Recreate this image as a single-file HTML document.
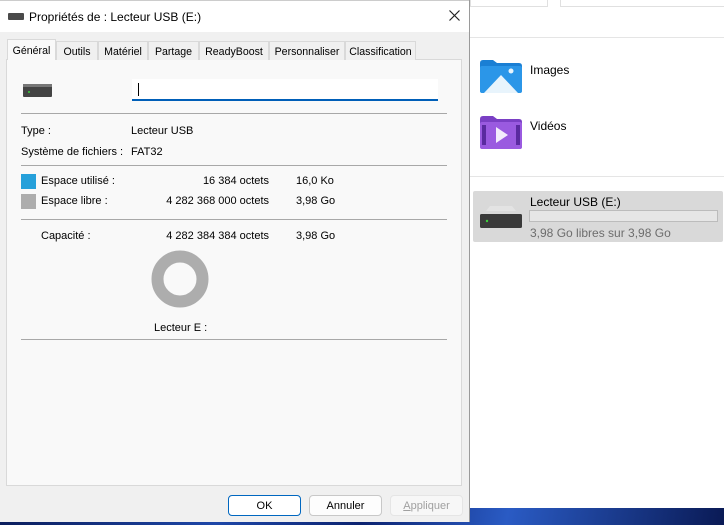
<!DOCTYPE html>
<html><head><meta charset="utf-8"><style>
*{margin:0;padding:0;box-sizing:border-box}
body{width:724px;height:525px;position:relative;overflow:hidden;background:#fff;font-family:"Liberation Sans",sans-serif;font-size:11px;color:#000}
.a{position:absolute;white-space:nowrap}
.sep{position:absolute;left:21px;width:426px;height:1px;background:#a8a8a8}
.tab{position:absolute;top:41px;height:19px;border:1px solid #d9d9d9;border-bottom:none;background:#f0f0f0;padding:4px 0 0;font-size:10.6px;text-align:center;overflow:hidden}
.btn{position:absolute;top:495px;width:73px;height:21px;border:1px solid #c8c8c8;border-radius:4px;background:#fdfdfd;text-align:center;line-height:21px;font-size:11px}
</style></head><body>
<div class="a" style="left:0;top:508px;width:724px;height:17px;background:linear-gradient(100deg,#0b1d5c,#1e47a8 30%,#0c2370 50%,#2a5bc4 70%,#0a1a55)"></div>
<div class="a" style="left:470px;top:0;width:254px;height:508px;background:#fff"></div>
<div class="a" style="left:470px;top:0;width:78px;height:7px;border:1px solid #e0e0e0;border-top:none"></div>
<div class="a" style="left:560px;top:0;width:164px;height:7px;border:1px solid #e0e0e0;border-top:none;border-right:none"></div>
<div class="a" style="left:470px;top:37px;width:254px;height:1px;background:#e5e5e5"></div>
<div class="a" style="left:470px;top:176px;width:254px;height:1px;background:#e5e5e5"></div>
<svg class="a" style="left:480px;top:60px" width="42" height="33" viewBox="0 0 42 33"><path d="M0 3q0-3 3-3h10l4 3h22q3 0 3 3v24q0 3-3 3H3q-3 0-3-3z" fill="#1a7fd4"/><rect x="0" y="6" width="42" height="27" rx="2" fill="#2b96e8"/><path d="M4 33L21 15l17 18z" fill="#e8f4fc"/><circle cx="31" cy="11" r="2.5" fill="#e8f4fc"/></svg>
<div class="a" style="left:530px;top:63px;font-size:12px">Images</div>
<svg class="a" style="left:480px;top:116px" width="42" height="33" viewBox="0 0 42 33"><path d="M0 3q0-3 3-3h10l4 3h22q3 0 3 3v24q0 3-3 3H3q-3 0-3-3z" fill="#7a3fc4"/><rect x="0" y="6" width="42" height="27" rx="2" fill="#9a5ae0"/><rect x="2" y="9" width="4" height="20" fill="#5a2aa0"/><rect x="36" y="9" width="4" height="20" fill="#5a2aa0"/><path d="M16 11l12 8-12 8z" fill="#f3ecfc"/></svg>
<div class="a" style="left:530px;top:119px;font-size:12px">Vidéos</div>
<div class="a" style="left:473px;top:191px;width:250px;height:51px;background:#d9d9d9;border-radius:2px"></div>
<svg class="a" style="left:480px;top:205px" width="42" height="24" viewBox="0 0 42 24"><path d="M6 6l4-5h22l4 5z" fill="#e3e3e3"/><rect x="0" y="9" width="42" height="14" rx="1.5" fill="#3a3a3a"/><circle cx="7" cy="16" r="1.2" fill="#3ad13a"/></svg>
<div class="a" style="left:530px;top:195px;font-size:12px">Lecteur USB (E:)</div>
<div class="a" style="left:529px;top:210px;width:189px;height:12px;background:#e6e6e6;border:1px solid #bcbcbc"></div>
<div class="a" style="left:530px;top:226px;font-size:12px;color:#6d6d6d">3,98 Go libres sur 3,98 Go</div>
<div class="a" style="left:0;top:0;width:470px;height:522px;background:#f0f0f0;border-right:1px solid #9a9a9a"></div>
<div class="a" style="left:0;top:0;width:469px;height:32px;background:#fff;border-top:1px solid #ccc"></div>
<svg class="a" style="left:8px;top:13px" width="16" height="7"><rect width="16" height="7" rx="1" fill="#4a4a4a"/></svg>
<div class="a" style="left:29px;top:10px;font-size:12px">Propriétés de : Lecteur USB (E:)</div>
<svg class="a" style="left:449px;top:10px" width="11" height="11"><path d="M0.5 .5l10 10M10.5 .5l-10 10" stroke="#222" stroke-width="1.2"/></svg>
<div class="a" style="left:6px;top:59px;width:456px;height:427px;background:#f9f9f9;border:1px solid #d9d9d9"></div>
<div class="tab" style="left:56px;width:42px">Outils</div>
<div class="tab" style="left:98px;width:50px">Matériel</div>
<div class="tab" style="left:148px;width:51px">Partage</div>
<div class="tab" style="left:199px;width:70px">ReadyBoost</div>
<div class="tab" style="left:269px;width:76px">Personnaliser</div>
<div class="tab" style="left:345px;width:71px">Classification</div>
<div class="tab" style="left:7px;top:39px;height:21px;width:49px;background:#f9f9f9;border-color:#d9d9d9;padding-top:5px">Général</div>
<svg class="a" style="left:23px;top:84px" width="29" height="13" viewBox="0 0 29 13"><rect y="0" width="29" height="13" rx="1" fill="#444"/><rect y="0" width="29" height="3" fill="#777"/><circle cx="6" cy="8" r="1" fill="#3ad13a"/></svg>
<div class="a" style="left:132px;top:79px;width:306px;height:22px;background:#fff;border-bottom:2px solid #005fb8"></div>
<div class="a" style="left:138px;top:83px;width:1px;height:13px;background:#000"></div>
<div class="sep" style="top:113px"></div>
<div class="a" style="left:21px;top:125px">Type :</div>
<div class="a" style="left:131px;top:125px">Lecteur USB</div>
<div class="a" style="left:21px;top:146px">Système de fichiers :</div>
<div class="a" style="left:131px;top:146px">FAT32</div>
<div class="sep" style="top:165px"></div>
<div class="a" style="left:21px;top:174px;width:15px;height:15px;background:#26a0da"></div>
<div class="a" style="left:41px;top:175px">Espace utilisé :</div>
<div class="a" style="left:150px;top:175px;width:119px;text-align:right">16 384 octets</div>
<div class="a" style="left:296px;top:175px">16,0 Ko</div>
<div class="a" style="left:21px;top:194px;width:15px;height:15px;background:#adadad"></div>
<div class="a" style="left:41px;top:195px">Espace libre :</div>
<div class="a" style="left:150px;top:195px;width:119px;text-align:right">4 282 368 000 octets</div>
<div class="a" style="left:296px;top:195px">3,98 Go</div>
<div class="sep" style="top:219px"></div>
<div class="a" style="left:41px;top:230px">Capacité :</div>
<div class="a" style="left:150px;top:230px;width:119px;text-align:right">4 282 384 384 octets</div>
<div class="a" style="left:296px;top:230px">3,98 Go</div>
<svg class="a" style="left:151px;top:250px" width="58" height="58"><circle cx="29" cy="29" r="22.5" fill="none" stroke="#adadad" stroke-width="12"/></svg>
<div class="a" style="left:154px;top:322px">Lecteur E :</div>
<div class="sep" style="top:339px"></div>
<div class="btn" style="left:228px;border:1px solid #0067c0;background:#fff">OK</div>
<div class="btn" style="left:309px">Annuler</div>
<div class="btn" style="left:390px;color:#a0a0a0;border-color:#e5e5e5;background:#f7f7f7"><u>A</u>ppliquer</div>
</body></html>
